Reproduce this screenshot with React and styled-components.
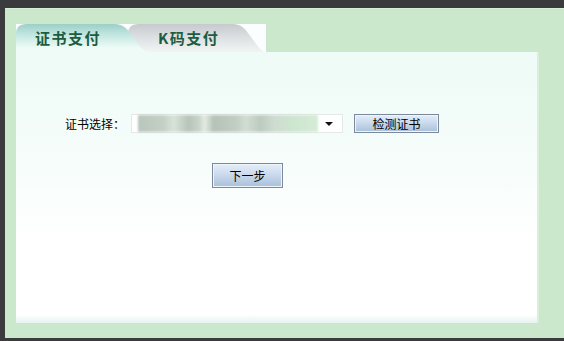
import React from "react";
import styled, { createGlobalStyle } from "styled-components";

const Global = createGlobalStyle`
  html, body { margin: 0; padding: 0; background: #3a3a3a; }
  body { font-family: "Noto Sans CJK SC", "Noto Sans", sans-serif; }
`;

const Frame = styled.div`
  width: 564px;
  height: 341px;
  box-sizing: border-box;
  background: #3b3b3d;
  padding: 8px 0 3px 5px;
  display: flex;
`;

const Green = styled.div`
  flex: 1;
  background: #cce8cc;
  border-top: 1px solid #d8eed8;
  padding: 15px 27px 15px 11px;
  display: flex;
  flex-direction: column;
`;

const TabRow = styled.div`
  width: 250px;
  height: 28px;
  background: #fbfefe;
  display: flex;
  align-items: stretch;
`;

const tabPath = (w) =>
  `path("M0 10 Q0 0 10 0 H${w - 34} C${w - 24} 0 ${w - 21} 5 ${w - 15} 13 C${w - 9} 21 ${w - 5} 28 ${w} 28 H0 Z")`;

const Tab = styled.div`
  position: relative;
  width: ${(p) => p.$w}px;
  margin-left: ${(p) => p.$ml || 0}px;
  z-index: ${(p) => p.$z};
  background: ${(p) =>
    p.$active
      ? "linear-gradient(#9ccfc8 0%, #c4e7e1 40%, #eefbf7 85%, #f2fcf9 100%)"
      : "linear-gradient(#c6cace 0%, #dcdfe1 45%, #f2f4f4 100%)"};
  clip-path: ${(p) => tabPath(p.$w)};
  color: #1c5c40;
  font-weight: bold;
  font-size: 15px;
  letter-spacing: 1.5px;
  display: flex;
  align-items: center;
  padding-left: ${(p) => p.$pl}px;
  padding-bottom: 2px;
  box-sizing: border-box;
`;

const Panel = styled.div`
  width: 521px;
  height: 271px;
  box-sizing: border-box;
  background: linear-gradient(#eefbf6 0%, #f6fdfb 40%, #ffffff 70%, #ffffff 97%, #e4f2ef 100%);
  box-shadow: 2px 0 0 #d9efd9;
  padding: 62px 0 0 49px;
  display: flex;
  flex-direction: column;
`;

const Row = styled.div`
  display: flex;
  align-items: center;
  height: 19px;
`;

const Label = styled.span`
  font-size: 12px;
  color: #000;
  width: 66px;
`;

const Select = styled.div`
  width: 212px;
  height: 19px;
  box-sizing: border-box;
  border: 1px solid #e4e8e6;
  background: #fff;
  display: flex;
  align-items: center;
  padding-left: 6px;
`;

const Blur = styled.div`
  width: 180px;
  height: 17px;
  filter: blur(1.2px);
  background: linear-gradient(
    90deg,
    #b9c6bc 0%, #c4d0c6 14%, #d8e4da 20%, #b7c4b9 28%, #c9d5cb 34%,
    #e3ece4 37%, #b5c2b7 42%, #c3cec4 55%, #d2ddd3 60%, #bccabf 68%,
    #cfdcd1 76%, #cde6cf 86%, #d5ecd6 100%
  );
`;

const Arrow = styled.div`
  margin-left: 7px;
  width: 0;
  height: 0;
  border-left: 4px solid transparent;
  border-right: 4px solid transparent;
  border-top: 4px solid #111;
`;

const Button = styled.button`
  width: ${(p) => p.$w}px;
  height: ${(p) => p.$h}px;
  margin-left: ${(p) => p.$ml || 0}px;
  box-sizing: border-box;
  border: 1px solid #7a8a9c;
  background: linear-gradient(#e6eef8 0%, #cbdaec 45%, #a9c0da 100%);
  font-family: "Noto Sans CJK SC", sans-serif;
  font-size: 12px;
  color: #000;
  padding: 0;
  display: flex;
  align-items: center;
  justify-content: center;
  box-shadow: inset 0 0 0 1px #eef4fb;
`;

const NextWrap = styled.div`
  margin-top: 30px;
  padding-left: 147px;
`;

export default function App() {
  return (
    <>
      <Global />
      <Frame>
        <Green>
          <TabRow>
            <Tab $active $w={132} $pl={19} $z={2}>证书支付</Tab>
            <Tab $w={138} $ml={-20} $pl={30} $z={1}>K码支付</Tab>
          </TabRow>
          <Panel>
            <Row>
              <Label>证书选择：</Label>
              <Select>
                <Blur />
                <Arrow />
              </Select>
              <Button $w={85} $h={19} $ml={11}>检测证书</Button>
            </Row>
            <NextWrap>
              <Button $w={71} $h={25}>下一步</Button>
            </NextWrap>
          </Panel>
        </Green>
      </Frame>
    </>
  );
}
